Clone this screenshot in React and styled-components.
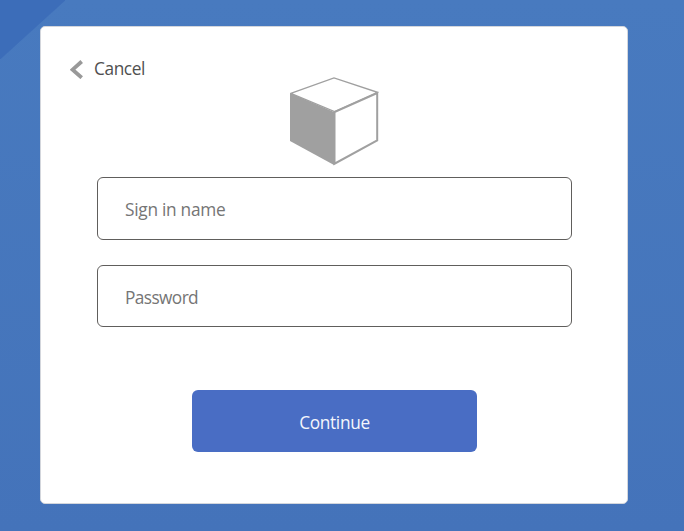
import React from "react";
import styled, { createGlobalStyle } from "styled-components";

const GlobalStyle = createGlobalStyle`
  * { box-sizing: border-box; }
  html, body { margin: 0; padding: 0; }
  body {
    font-family: "Segoe UI", "Open Sans", "Noto Sans", sans-serif;
    font-size: 17.3px;
    font-weight: 400;
    overflow: hidden;
  }
`;

const Page = styled.main`
  height: 531px;
  width: 684px;
  padding: 26px 56px 27px 40px;
  background:
    linear-gradient(to bottom right, #3c6db9 50%, transparent calc(50% + 1px)) 0 0 / 65px 59px no-repeat,
    linear-gradient(to bottom, #487abf, #4473ba);
`;

const Card = styled.section`
  display: flex;
  flex-direction: column;
  height: 478px;
  border: 1px solid #d3d6dc;
  border-radius: 5px;
  background: #fff;
`;

const Header = styled.header`
  display: grid;
  grid-template-columns: 249px 89px 1fr;
  height: 150px;
`;

const CancelButton = styled.button`
  display: flex;
  align-items: center;
  align-self: start;
  justify-self: start;
  gap: 10px;
  height: 24px;
  margin: 30px 0 0 29px;
  padding: 0;
  border: 0;
  background: none;
  color: #505050;
  font: inherit;
  line-height: 24px;
  letter-spacing: -0.43px;
`;

const Chevron = styled.svg`
  display: block;
  width: 14px;
  height: 20px;
`;

const Logo = styled.svg`
  display: block;
  width: 89px;
  height: 89px;
  margin-top: 50px;
`;

const Form = styled.form`
  display: flex;
  flex-direction: column;
  width: 475px;
  margin-left: 56px;
`;

const Field = styled.input`
  width: 100%;
  height: ${({ $height }) => $height}px;
  margin: 0 0 25px;
  padding: 2px 27px 0;
  border: 1px solid #605e5c;
  border-radius: 6px;
  outline: 0;
  background: #fff;
  color: #323130;
  font: inherit;
  letter-spacing: ${({ $tracking }) => $tracking}px;

  &::placeholder {
    color: #757575;
    opacity: 1;
  }
`;

const ContinueButton = styled.button`
  align-self: center;
  width: 285px;
  height: 62px;
  margin-top: 38px;
  padding: 2px 0 0;
  border: 0;
  border-radius: 6px;
  background: #496dc4;
  color: #f4f6fc;
  font: inherit;
  letter-spacing: -0.35px;
`;

export default function App() {
  return (
    <>
      <GlobalStyle />
      <Page>
        <Card>
          <Header>
            <CancelButton type="button">
              <Chevron viewBox="0 0 14 20" aria-hidden="true">
                <path d="M11.7 2.5 2.6 10.7 11.7 18.7" fill="none" stroke="#999" strokeWidth="3.8" />
              </Chevron>
              Cancel
            </CancelButton>
            <Logo viewBox="0 0 89 89" aria-hidden="true">
              <path d="M0 16 44 35V88L0 64Z" fill="#a0a0a0" />
              <path d="M.8 16.4 44 .9 87.4 15.3 44.5 34.6Z" fill="none" stroke="#a0a0a0" strokeWidth="1.4" />
              <path d="M44.5 35.2 87.2 16.2V63.5L44.5 86.7Z" fill="none" stroke="#a0a0a0" strokeWidth="2" />
            </Logo>
          </Header>
          <Form onSubmit={(event) => event.preventDefault()}>
            <Field $height={63} $tracking={-0.27} type="text" placeholder="Sign in name" aria-label="Sign in name" />
            <Field $height={62} $tracking={-0.6} type="password" placeholder="Password" aria-label="Password" />
            <ContinueButton type="submit">Continue</ContinueButton>
          </Form>
        </Card>
      </Page>
    </>
  );
}
